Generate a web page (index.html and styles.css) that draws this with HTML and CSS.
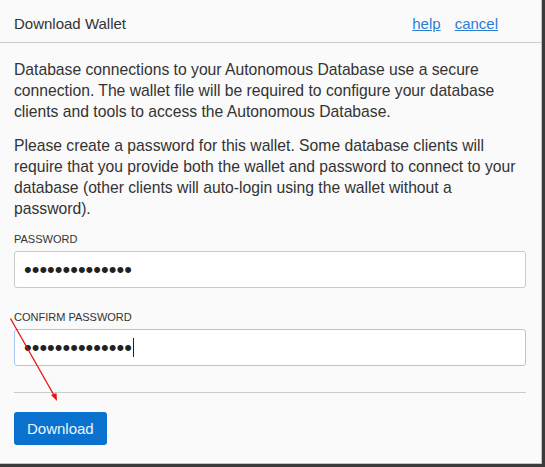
FILE: index.html
```html
<!DOCTYPE html>
<html lang="en">
<head>
<meta charset="utf-8">
<title>Download Wallet</title>
<link rel="stylesheet" href="styles.css">
</head>
<body>
<div class="dialog">
  <header class="dialog-header">
    <h1 class="dialog-title">Download Wallet</h1>
    <nav class="dialog-links">
      <a href="#" class="link">help</a>
      <a href="#" class="link">cancel</a>
    </nav>
  </header>
  <div class="dialog-body">
    <p class="text">Database connections to your Autonomous Database use a secure connection. The wallet file will be required to configure your database clients and tools to access the Autonomous Database.</p>
    <p class="text">Please create a password for this wallet. Some database clients will require that you provide both the wallet and password to connect to your database (other clients will auto-login using the wallet without a password).</p>
    <div class="form-group">
      <label class="label">PASSWORD</label>
      <div class="field"><span class="dots">••••••••••••••</span></div>
    </div>
    <div class="form-group">
      <label class="label">CONFIRM PASSWORD</label>
      <div class="field field-focus"><span class="dots">••••••••••••••</span><span class="caret"></span></div>
    </div>
    <hr class="divider">
    <button class="btn-primary" type="button">Download</button>
  </div>
  <svg class="annotation" width="542" height="464" viewBox="0 0 542 464">
    <line x1="10.5" y1="318.5" x2="55" y2="397" stroke="#e8110f" stroke-width="1.3"/>
    <path d="M57 401 L51 395 L56.5 393 Z" fill="#e8110f"/>
  </svg>
</div>
</body>
</html>
```
FILE: styles.css
```css
html, body {
  margin: 0;
  padding: 0;
}
body {
  background: #3b3b3b;
  width: 545px;
  height: 467px;
  overflow: hidden;
  font-family: "Liberation Sans", Arial, sans-serif;
  color: #333;
}
.dialog {
  position: relative;
  width: 542px;
  height: 464px;
  box-sizing: border-box;
  background: #fafafa;
  border-right: 1px solid #c4c4c4;
  border-bottom: 1px solid #c4c4c4;
}
.dialog-header {
  height: 43px;
  box-sizing: border-box;
  border-bottom: 1px solid #c9ccd3;
  display: flex;
  align-items: center;
  justify-content: space-between;
  padding: 4px 43px 0 14px;
}
.dialog-title {
  margin: 0;
  font-size: 15px;
  font-weight: normal;
  color: #333;
}
.dialog-links {
  display: flex;
  gap: 14px;
}
.link {
  font-size: 15px;
  color: #2b7fd3;
  text-decoration: underline;
}
.dialog-body {
  padding: 16px 15px 0 14px;
}
.text {
  margin: 0 0 13px 0;
  font-size: 15.7px;
  line-height: 21px;
  color: #333;
}
.form-group {
  margin-bottom: 22px;
}
.label {
  display: block;
  font-size: 11px;
  line-height: 14px;
  color: #333;
  margin-bottom: 5px;
}
.field {
  height: 37px;
  box-sizing: border-box;
  background: #fff;
  border: 1px solid #c6cad1;
  border-radius: 3px;
  display: flex;
  align-items: center;
  padding-left: 9px;
}
.field-focus {
  border-color: #a8c8ee;
}
.dots {
  font-family: "Liberation Sans", Arial, sans-serif;
  font-size: 22px;
  line-height: 1;
  color: #222;
}
.caret {
  width: 1px;
  height: 19px;
  background: #222;
  margin-left: 1px;
}
.divider {
  border: 0;
  border-top: 1px solid #c9ccd2;
  margin: 26px 0 19px 0;
}
.btn-primary {
  height: 33px;
  padding: 0 13px;
  background: #0a72ce;
  color: #eef5fc;
  font-family: "Liberation Sans", Arial, sans-serif;
  font-size: 15px;
  border: 0;
  border-radius: 3px;
}
.annotation {
  position: absolute;
  left: 0;
  top: 0;
  pointer-events: none;
}
```
